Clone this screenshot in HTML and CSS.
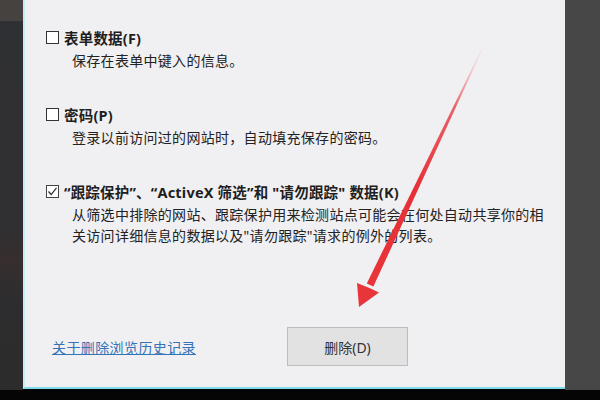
FILE: index.html
```html
<!DOCTYPE html>
<html lang="zh-CN">
<head>
    <meta charset="UTF-8">
    <title>删除浏览历史记录</title>
    <link rel="stylesheet" href="styles.css">
</head>
<body>
    <div class="screen">
        <div class="desk-left"></div>

        <div class="dialog">
            <div class="option">
                <label class="option-title">
                    <span class="checkbox"></span>
                    表单数据(F)
                </label>
                <p class="option-desc">保存在表单中键入的信息。</p>
            </div>

            <div class="option">
                <label class="option-title">
                    <span class="checkbox"></span>
                    密码(P)
                </label>
                <p class="option-desc">登录以前访问过的网站时，自动填充保存的密码。</p>
            </div>

            <div class="option">
                <label class="option-title">
                    <span class="checkbox checked">
                        <svg viewBox="0 0 13 13" width="13" height="13">
                            <polyline points="2.5,6.5 5.2,9.5 10.5,2.8" fill="none" stroke="#2b2b2b" stroke-width="1.2"/>
                        </svg>
                    </span>
                    “跟踪保护”、“ActiveX 筛选”和 "请勿跟踪" 数据(K)
                </label>
                <p class="option-desc">从筛选中排除的网站、跟踪保护用来检测站点可能会在何处自动共享你的相关访问详细信息的数据以及"请勿跟踪"请求的例外的列表。</p>
            </div>

            <div class="footer">
                <a class="help-link" href="#">关于删除浏览历史记录</a>
                <button class="btn">删除(D)</button>
            </div>
        </div>

        <div class="desk-right"></div>

        <!-- red pointer drawn on top of the dialog -->
        <svg class="pointer" viewBox="0 0 600 400" width="600" height="400">
            <defs>
                <linearGradient id="shaftFade" x1="483" y1="47" x2="370" y2="285" gradientUnits="userSpaceOnUse">
                    <stop offset="0" stop-color="#f3c9cc" stop-opacity="0.2"/>
                    <stop offset="0.25" stop-color="#e8636a"/>
                    <stop offset="0.6" stop-color="#e63036"/>
                    <stop offset="1" stop-color="#e8353a"/>
                </linearGradient>
            </defs>
            <polygon points="483.5,47.2 482.6,46.8 366.8,283.4 373.4,286.6" fill="url(#shaftFade)"/>
            <polygon points="359,307 379,292.5 369.5,288 357,283" fill="#e8353a"/>
        </svg>
    </div>
</body>
</html>
```

FILE: styles.css
```css
body {
    margin: 0;
    background-color: #050505;
    font-family: "Noto Sans", "Noto Sans CJK SC", sans-serif;
}
.screen {
    position: relative;
    width: 600px;
    height: 400px;
    display: flex;
    align-items: flex-start;
    overflow: hidden;
}
.desk-left {
    width: 23px;
    height: 390px;
    background: linear-gradient(#46423f 0, #46423f 21px, #2f3033 21px, #302f31 230px, #372e2e 260px, #2d2d2f 300px, #2c2c2c 100%);
}
.desk-right {
    width: 35px;
    height: 390px;
    background-color: #474747;
}
.dialog {
    flex: 1;
    height: 389px;
    box-sizing: border-box;
    border-left: 2px solid #c4ecf3;
    border-bottom: 2px solid #7fdcec;
    background-color: #f0eff2;
    padding: 26px 0 21px 21px;
    display: flex;
    flex-direction: column;
    color: #1e1e1e;
}
.option {
    margin-bottom: 32px;
}
.option-title {
    display: flex;
    align-items: center;
    gap: 5px;
    height: 22px;
    font-size: 14.5px;
    font-weight: 700;
    letter-spacing: 0.2px;
}
.checkbox {
    width: 13px;
    height: 13px;
    box-sizing: border-box;
    border: 1px solid #333;
    background-color: #fff;
    flex-shrink: 0;
}
.checkbox.checked {
    border-color: #444;
}
.checkbox svg {
    display: block;
    margin: -1px;
}
.option-desc {
    margin: 2px 0 0 26px;
    width: 480px;
    font-size: 14px;
    line-height: 21px;
    letter-spacing: 0.3px;
    color: #222;
}
.footer {
    margin-top: auto;
    display: flex;
    align-items: center;
    gap: 91px;
    padding-left: 6px;
}
.help-link {
    color: #3473b5;
    font-size: 14px;
    letter-spacing: 0.4px;
    text-decoration: underline;
}
.btn {
    width: 121px;
    height: 39px;
    background-color: #e2e2e3;
    border: 1px solid #bdbdbd;
    font-family: "Noto Sans", "Noto Sans CJK SC", sans-serif;
    font-size: 14px;
    color: #333;
    padding: 0;
}
.pointer {
    position: absolute;
    left: 0;
    top: 0;
    pointer-events: none;
}
```
